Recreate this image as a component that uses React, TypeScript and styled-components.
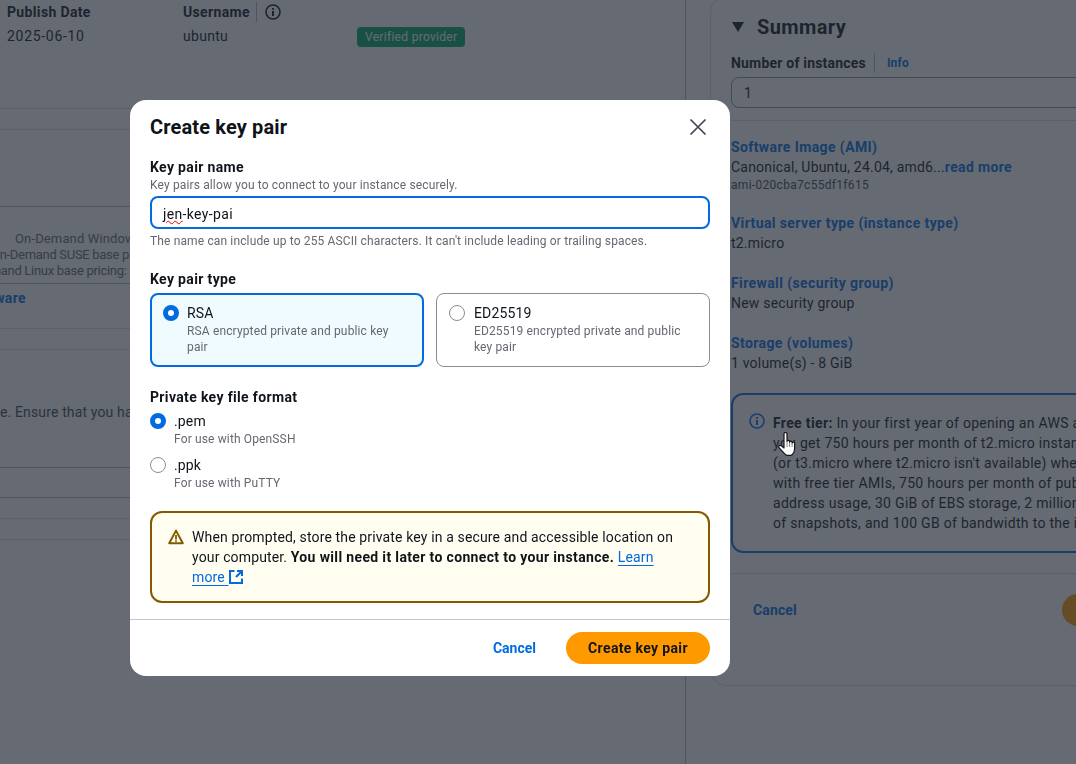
import React from "react"
import styled, { createGlobalStyle } from "styled-components"

const GlobalStyle = createGlobalStyle`
  html, body {
    margin: 0;
    height: 100%;
    overflow: hidden;
    background: #ffffff;
  }
  body, button {
    font-family: "Roboto", "Liberation Sans", sans-serif;
    font-size: 14px;
    line-height: 20px;
    letter-spacing: 0.14px;
    color: #0f141a;
  }
  strong {
    letter-spacing: 0.35px;
  }
`

const pricing = [
  { text: "On-Demand Windows base pricing: 0.0162 USD per Hour", shift: 15, spacing: 0.14 },
  { text: "On-Demand SUSE base pricing: 0.0116 USD per Hour", shift: -9, spacing: -0.3 },
  { text: "On-Demand Linux base pricing: 0.0116 USD per Hour", shift: -44, spacing: -0.3 }
]

const summaryItems = [
  { title: "Virtual server type (instance type)", value: "t2.micro" },
  { title: "Firewall (security group)", value: "New security group" },
  { title: "Storage (volumes)", value: "1 volume(s) - 8 GiB" }
]

const CloseIcon = () => (
  <svg width="18" height="18" viewBox="0 0 18 18" fill="none" stroke="#424650" strokeWidth="1.7">
    <path d="M1.5 1.5 16.5 16.5M16.5 1.5 1.5 16.5" />
  </svg>
)

const InfoIcon = ({ color, size }: { color: string; size: number }) => (
  <svg width={size} height={size} viewBox="0 0 16 16" fill="none" stroke={color} strokeWidth="1.6" style={{ flex: "none" }}>
    <circle cx="8" cy="8" r="7" />
    <path d="M8 7v5" strokeWidth="2" />
    <path d="M8 4v1.8" strokeWidth="2" />
  </svg>
)

const WarningIcon = () => (
  <svg width="16" height="16" viewBox="0 0 16 16" fill="none" stroke="#855900" strokeWidth="2" strokeLinejoin="round">
    <path d="M8 1.6 1.2 14.2h13.6z" />
    <path d="M8 6v4.4M8 11.2v1.6" strokeWidth="1.8" />
  </svg>
)

const ExternalIcon = () => (
  <svg width="14" height="14" viewBox="0 0 14 14" fill="none" stroke="#006ce0" strokeWidth="2">
    <path d="M5.5 1H1v12h12V8.5" />
    <path d="M8 1h5v5M13 1 7 7" />
  </svg>
)

const HandCursor = () => (
  <svg width="20" height="24" viewBox="0 0 20 24">
    <path
      d="M6 2c0-2 3-2 3 0v7.5c0-1.6 2.6-1.6 2.6 0v.8c0-1.5 2.5-1.5 2.5 0v.8c0-1.4 2.5-1.4 2.5 0V17c0 2.6-1 4-2.2 5.4-.4.6-1 1-1.8 1H9c-1-.2-1.6-1-2.2-1.6C5 20 3 18 1 15.6c-1-1.4.9-3 2.2-1.8L6 16z"
      fill="#ffffff"
      stroke="#161616"
      strokeWidth="1.2"
      strokeLinejoin="round"
    />
    <path d="M9 10v5M11.6 11v4M14.1 11v4" stroke="#555555" strokeWidth="0.7" />
  </svg>
)

export default function App() {
  return (
    <>
      <GlobalStyle />
      <Page>
        <MainColumn>
          <MetaGrid>
            <MetaHead>Publish Date</MetaHead>
            <MetaHead>
              Username
              <MetaDivider />
              <InfoIcon color="#0f141a" size={16} />
            </MetaHead>
            <span />
            <MetaValue $spacing={0.7}>2025-06-10</MetaValue>
            <MetaValue $spacing={0.3}>ubuntu</MetaValue>
            <Badge>Verified provider</Badge>
          </MetaGrid>

          <Band $height={61} $tone="soft" />
          <Band $height={21} $tone="soft" />
          <Band $height={77} $tone="strong" />
          <PricingBand $height={77} $tone="strong">
            {pricing.map((p) => (
              <PricingLine key={p.text} $shift={p.shift} $spacing={p.spacing}>
                {p.text}
              </PricingLine>
            ))}
          </PricingBand>
          <LinkBand $height={45} $tone="soft">
            <StrongLink>software</StrongLink>
          </LinkBand>
          <Band $height={21} $tone="soft" />
          <NoteBand $height={118} $tone="strong">
            <NoteText>e. Ensure that you have access to the selected key pair</NoteText>
          </NoteBand>
          <Band $height={30} $tone="strong" />
          <Band $height={21} $tone="soft" />
          <Band $height={21} $tone="soft" />
        </MainColumn>

        <SideColumn>
          <SummaryCard>
            <SummaryHeader>
              <Caret />
              <SummaryTitle>Summary</SummaryTitle>
            </SummaryHeader>
            <CountLabel>
              <CountName>Number of instances</CountName>
              <InfoLink>Info</InfoLink>
            </CountLabel>
            <CountInput>1</CountInput>
            <SummaryRule />
            <SummaryList>
              <SummaryItem>
                <ItemTitle>Software Image (AMI)</ItemTitle>
                <ItemValue>
                  Canonical, Ubuntu, 24.04, amd6...<ReadMore>read more</ReadMore>
                </ItemValue>
                <ItemHint>ami-020cba7c55df1f615</ItemHint>
              </SummaryItem>
              {summaryItems.map((item) => (
                <SummaryItem key={item.title}>
                  <ItemTitle>{item.title}</ItemTitle>
                  <ItemValue>{item.value}</ItemValue>
                </SummaryItem>
              ))}
            </SummaryList>
            <FreeTierBox>
              <InfoIcon color="#006ce0" size={16} />
              <FreeTierText>
                <strong>Free tier:</strong> In your first year of opening an AWS account,
                <br />
                you get 750 hours per month of t2.micro instance usage
                <br />
                (or t3.micro where t2.micro isn't available) when used
                <br />
                with free tier AMIs, 750 hours per month of public IPv4
                <br />
                address usage, 30 GiB of EBS storage, 2 million I/Os, 1 GB
                <br />
                of snapshots, and 100 GB of bandwidth to the internet.
              </FreeTierText>
            </FreeTierBox>
            <CardFooter>
              <GhostAction>Cancel</GhostAction>
              <LaunchButton>Launch instance</LaunchButton>
            </CardFooter>
          </SummaryCard>
        </SideColumn>
      </Page>

      <Overlay>
        <Dialog>
          <DialogHeader>
            <DialogTitle>Create key pair</DialogTitle>
            <CloseButton aria-label="Close">
              <CloseIcon />
            </CloseButton>
          </DialogHeader>

          <DialogBody>
            <FieldGroup>
              <FieldLabel>Key pair name</FieldLabel>
              <FieldHint>Key pairs allow you to connect to your instance securely.</FieldHint>
              <NameInput>
                <Misspelt>jen</Misspelt>-key-pai
              </NameInput>
              <FieldNote>
                The name can include up to 255 ASCII characters. It can't include leading or trailing spaces.
              </FieldNote>
            </FieldGroup>

            <FieldGroup>
              <FieldLabel>Key pair type</FieldLabel>
              <TileRow>
                <Tile $selected>
                  <Radio $checked />
                  <div>
                    <OptionName>RSA</OptionName>
                    <OptionHint>RSA encrypted private and public key pair</OptionHint>
                  </div>
                </Tile>
                <Tile>
                  <Radio />
                  <div>
                    <OptionName>ED25519</OptionName>
                    <OptionHint>ED25519 encrypted private and public key pair</OptionHint>
                  </div>
                </Tile>
              </TileRow>
            </FieldGroup>

            <FieldGroup>
              <FieldLabel>Private key file format</FieldLabel>
              <RadioStack>
                <RadioRow>
                  <Radio $checked />
                  <div>
                    <OptionName>.pem</OptionName>
                    <OptionHint>For use with OpenSSH</OptionHint>
                  </div>
                </RadioRow>
                <RadioRow>
                  <Radio />
                  <div>
                    <OptionName>.ppk</OptionName>
                    <OptionHint>For use with PuTTY</OptionHint>
                  </div>
                </RadioRow>
              </RadioStack>
            </FieldGroup>

            <WarningBox>
              <WarningGlyph>
                <WarningIcon />
              </WarningGlyph>
              <div>
                When prompted, store the private key in a secure and accessible location on your computer.{" "}
                <strong>You will need it later to connect to your instance.</strong>{" "}
                <LearnMore>
                  Learn more{" "}
                  <ExternalGlyph>
                    <ExternalIcon />
                  </ExternalGlyph>
                </LearnMore>
              </div>
            </WarningBox>
          </DialogBody>

          <DialogFooter>
            <CancelAction>Cancel</CancelAction>
            <PrimaryAction>Create key pair</PrimaryAction>
          </DialogFooter>
        </Dialog>
      </Overlay>

      <CursorSpot>
        <HandCursor />
      </CursorSpot>
    </>
  )
}

const Page = styled.div`
  display: grid;
  grid-template-columns: 686px 390px;
  width: 1076px;
  height: 764px;
  overflow: hidden;
`

const MainColumn = styled.div`
  height: 764px;
  overflow: hidden;
  border-right: 1px solid #b4b4bb;
  box-sizing: border-box;
`

const MetaGrid = styled.div`
  display: grid;
  grid-template-columns: 176px 174px 1fr;
  grid-auto-rows: 24px;
  padding: 0 0 0 7px;
  align-items: center;
`

const MetaHead = styled.div`
  display: flex;
  align-items: center;
  font-weight: 700;
  letter-spacing: 0.35px;
  color: #0f141a;
`

const MetaDivider = styled.span`
  width: 1px;
  height: 20px;
  margin: 0 8px 0 6px;
  background: #b4b4bb;
`

const MetaValue = styled.div<{ $spacing: number }>`
  letter-spacing: ${(p) => p.$spacing}px;
  color: #0f141a;
`

const Badge = styled.div`
  justify-self: start;
  margin-top: 2px;
  padding: 0 8px;
  height: 20px;
  line-height: 20px;
  font-size: 12px;
  letter-spacing: 0.3px;
  border-radius: 4px;
  color: #ffffff;
  background: #00a862;
`

const Band = styled.div<{ $height: number; $tone: "soft" | "strong" }>`
  box-sizing: border-box;
  height: ${(p) => p.$height}px;
  border-bottom: 1px solid ${(p) => (p.$tone === "strong" ? "#b4b4bb" : "#dcdce0")};
`

const PricingBand = styled(Band)`
  padding-top: 24px;
  overflow: hidden;
`

const PricingLine = styled.div<{ $shift: number; $spacing: number }>`
  margin-left: ${(p) => p.$shift}px;
  white-space: nowrap;
  font-size: 13px;
  line-height: 16px;
  letter-spacing: ${(p) => p.$spacing}px;
  color: #656871;
`

const LinkBand = styled(Band)`
  padding-top: 4px;
  overflow: hidden;
`

const StrongLink = styled.div`
  margin-left: -32px;
  font-weight: 700;
  letter-spacing: 0.35px;
  color: #006ce0;
`

const NoteBand = styled(Band)`
  padding-top: 52px;
  overflow: hidden;
`

const NoteText = styled.div`
  white-space: nowrap;
  color: #424650;
`

const SideColumn = styled.div`
  padding-left: 24px;
  min-width: 0;
`

const SummaryCard = styled.section`
  box-sizing: border-box;
  width: 420px;
  height: 690px;
  margin-top: -4px;
  padding: 15px 20px 0 20px;
  border: 1px solid #dcdce0;
  border-radius: 16px;
`

const SummaryHeader = styled.div`
  display: flex;
  align-items: center;
  gap: 13px;
  height: 30px;
`

const Caret = styled.span`
  width: 0;
  height: 0;
  margin-left: 1px;
  border-left: 6.5px solid transparent;
  border-right: 6.5px solid transparent;
  border-top: 10px solid #0f141a;
`

const SummaryTitle = styled.h2`
  margin: 0;
  font-size: 20px;
  line-height: 24px;
  font-weight: 700;
  letter-spacing: 0.4px;
`

const CountLabel = styled.div`
  display: flex;
  align-items: center;
  margin-top: 11px;
  height: 20px;
`

const CountName = styled.span`
  font-weight: 700;
  letter-spacing: 0.2px;
`

const InfoLink = styled.span`
  margin-left: 8px;
  padding-left: 12px;
  border-left: 1px solid #b4b4bb;
  font-size: 12px;
  font-weight: 700;
  color: #006ce0;
`

const CountInput = styled.div`
  box-sizing: border-box;
  height: 31px;
  margin-top: 4px;
  padding: 5px 12px;
  border: 1px solid #8c8c94;
  border-radius: 8px;
`

const SummaryRule = styled.div`
  height: 1px;
  margin-top: 12px;
  background: #dcdce0;
`

const SummaryList = styled.div`
  display: flex;
  flex-direction: column;
  gap: 20px;
  margin-top: 16px;
`

const SummaryItem = styled.div``

const ItemTitle = styled.div`
  font-weight: 700;
  letter-spacing: 0.4px;
  color: #006ce0;
`

const ItemValue = styled.div`
  white-space: nowrap;
  letter-spacing: 0.2px;
`

const ReadMore = styled.span`
  font-weight: 700;
  letter-spacing: 0.35px;
  color: #006ce0;
`

const ItemHint = styled.div`
  font-size: 12px;
  line-height: 16px;
  letter-spacing: 0.3px;
  color: #424650;
`

const FreeTierBox = styled.div`
  box-sizing: border-box;
  display: flex;
  gap: 8px;
  height: 160px;
  margin-top: 20px;
  padding: 18px 0 0 16px;
  border: 2px solid #006ce0;
  border-radius: 12px;
`

const FreeTierText = styled.div`
  white-space: nowrap;
  letter-spacing: 0.3px;
  color: #0f141a;
`

const CardFooter = styled.div`
  display: flex;
  align-items: center;
  gap: 265px;
  margin-top: 20px;
  padding: 20px 0 0 22px;
  border-top: 1px solid #dcdce0;
`

const GhostAction = styled.span`
  font-weight: 700;
  color: #006ce0;
`

const LaunchButton = styled.span`
  padding: 6px 20px;
  font-weight: 700;
  white-space: nowrap;
  border-radius: 16px;
  background: #ff9900;
`

const Overlay = styled.div`
  position: fixed;
  inset: 0;
  background: rgba(35, 43, 55, 0.7);
`

const Dialog = styled.div`
  position: absolute;
  top: 100px;
  left: 130px;
  width: 600px;
  height: 576px;
  display: flex;
  flex-direction: column;
  box-sizing: border-box;
  border-radius: 16px;
  background: #ffffff;
`

const DialogHeader = styled.div`
  display: flex;
  align-items: center;
  justify-content: space-between;
  padding: 7px 23px 7px 20px;
  height: 40px;
  box-sizing: content-box;
`

const DialogTitle = styled.h1`
  margin: 0;
  font-size: 20px;
  line-height: 27px;
  font-weight: 700;
  letter-spacing: 0.15px;
`

const CloseButton = styled.button`
  display: flex;
  padding: 0;
  border: 0;
  background: none;
`

const DialogBody = styled.div`
  display: flex;
  flex-direction: column;
  gap: 20px;
  padding: 3px 20px 0 20px;
`

const FieldGroup = styled.div``

const FieldLabel = styled.div`
  font-weight: 700;
  line-height: 20px;
  letter-spacing: 0.35px;
`

const FieldHint = styled.div`
  font-size: 12px;
  line-height: 16px;
  color: #656871;
`

const NameInput = styled.div`
  box-sizing: border-box;
  height: 33px;
  margin-top: 3px;
  padding: 6px 11px;
  border: 2px solid #006ce0;
  border-radius: 8px;
  letter-spacing: 0.35px;
`

const Misspelt = styled.span`
  text-decoration: underline wavy #e00000 1px;
`

const FieldNote = styled.div`
  margin-top: 4px;
  font-size: 12px;
  line-height: 16px;
  color: #656871;
`

const TileRow = styled.div`
  display: grid;
  grid-template-columns: 274px 274px;
  gap: 12px;
  margin-top: 4px;
`

const Tile = styled.div<{ $selected?: boolean }>`
  box-sizing: border-box;
  display: flex;
  gap: ${(p) => (p.$selected ? 8 : 9)}px;
  height: 74px;
  padding: ${(p) => (p.$selected ? "8px 11px" : "9px 12px")};
  border: ${(p) => (p.$selected ? "2px solid #006ce0" : "1px solid #8c8c94")};
  border-radius: 8px;
  background: ${(p) => (p.$selected ? "#f0fbff" : "#ffffff")};
`

const Radio = styled.span<{ $checked?: boolean }>`
  flex: none;
  box-sizing: border-box;
  width: 16px;
  height: 16px;
  margin-top: 2px;
  border-radius: 50%;
  border: ${(p) => (p.$checked ? "5px solid #006ce0" : "1px solid #8c8c94")};
  background: #ffffff;
`

const OptionName = styled.div`
  line-height: 20px;
`

const OptionHint = styled.div`
  font-size: 12px;
  line-height: 16px;
  color: #656871;
`

const RadioStack = styled.div`
  display: flex;
  flex-direction: column;
  gap: 8px;
  margin-top: 4px;
`

const RadioRow = styled.div`
  display: flex;
  gap: 8px;
`

const WarningBox = styled.div`
  box-sizing: border-box;
  display: flex;
  gap: 8px;
  height: 92px;
  padding: 14px 32px 0 16px;
  border: 2px solid #855900;
  border-radius: 12px;
  background: #fffef0;
`

const WarningGlyph = styled.span`
  flex: none;
  height: 16px;
  margin-top: 2px;
`

const LearnMore = styled.span`
  color: #006ce0;
  text-decoration: underline;
  text-underline-offset: 3px;
`

const ExternalGlyph = styled.span`
  display: inline-block;
  vertical-align: -2px;
  line-height: 0;
`

const DialogFooter = styled.div`
  display: flex;
  align-items: center;
  justify-content: flex-end;
  gap: 30px;
  margin-top: 16px;
  padding: 12px 20px 0 20px;
  border-top: 1px solid #c6c6cd;
`

const CancelAction = styled.span`
  font-weight: 700;
  letter-spacing: 0;
  color: #006ce0;
`

const PrimaryAction = styled.button`
  height: 32px;
  width: 144px;
  padding: 0;
  border: 0;
  border-radius: 16px;
  font-weight: 700;
  letter-spacing: 0.35px;
  color: #0f141a;
  background: #ff9900;
`

const CursorSpot = styled.div`
  position: fixed;
  left: 778px;
  top: 432px;
  line-height: 0;
`
